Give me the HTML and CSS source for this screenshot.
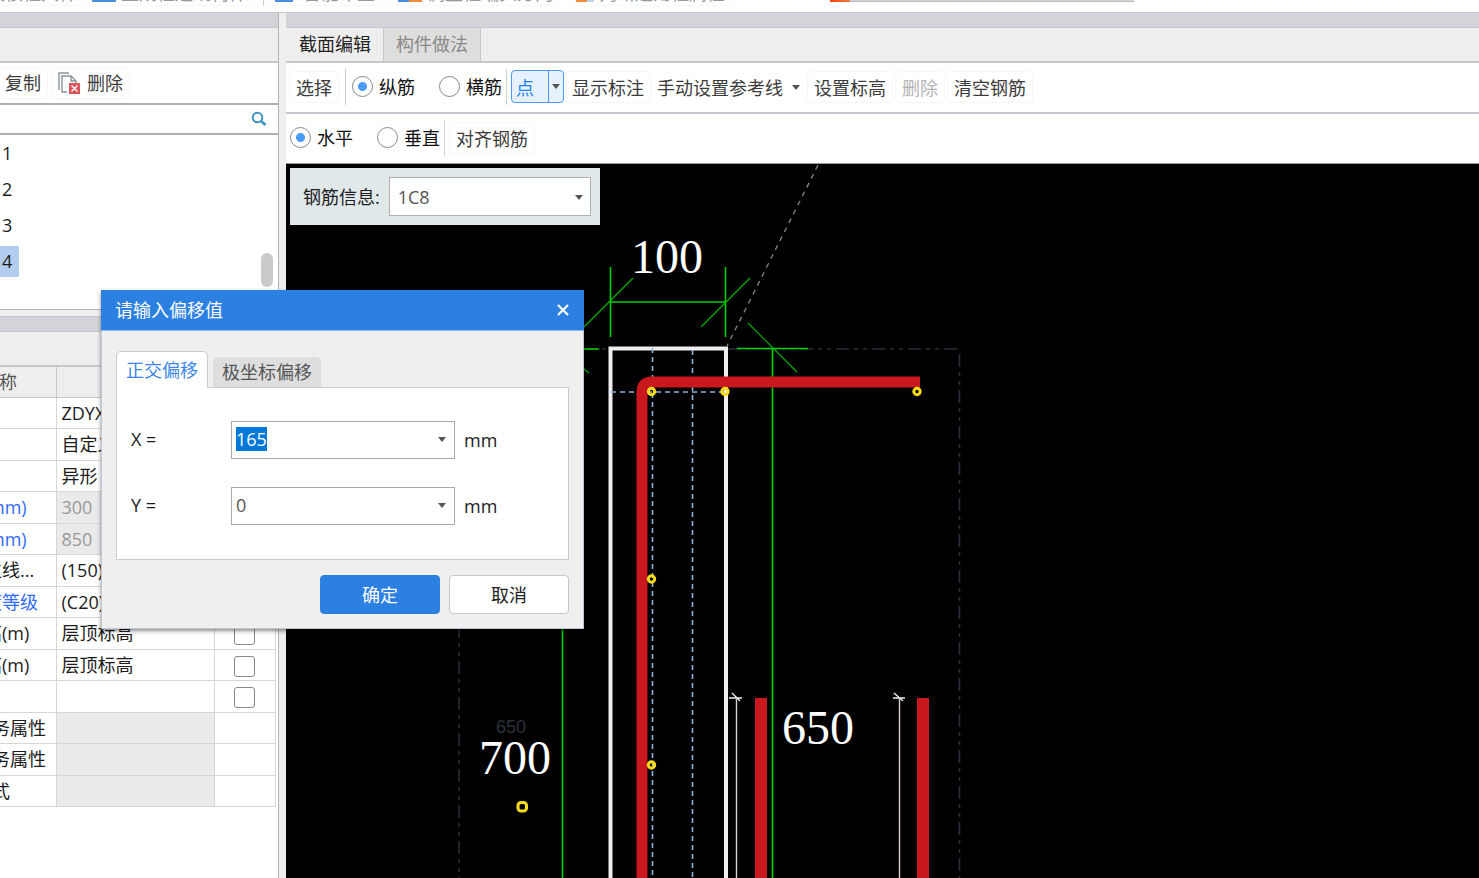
FILE: index.html
```html
<!DOCTYPE html>
<html lang="zh-CN">
<head>
<meta charset="utf-8">
<title>截面编辑</title>
<link rel="stylesheet" href="styles.css">
</head>
<body>
<header class="ribbon">
  <span class="ribbon-item first">校核柱大样</span>
  <span class="ribbon-item"><i class="chip wide"></i>生成柱边线构件</span>
  <span class="ribbon-sep"></span>
  <span class="ribbon-item roomy"><i class="chip"></i>智能布置</span>
  <span class="ribbon-item"><i class="chip mixed"></i>调整柱端头方向</span>
  <span class="ribbon-item"><i class="chip orange"></i>判断边角柱属性</span>
  <span class="notice"><i class="flame"></i></span>
</header>
<div class="workspace">
  <aside class="side">
    <div class="band"></div>
    <div class="caption"></div>
    <div class="side-tools">
      <button class="tool" type="button">复制</button>
      <button class="tool" type="button">
        <svg class="tool-icon" width="22" height="22" viewBox="0 0 22 22" fill="none" stroke="#8b939b" stroke-width="1.4">
          <path d="M1 18V1H11"/><path d="M9 20H4V4H13L18 9V11M13 4V9H18"/>
          <rect x="11" y="11" width="11" height="11" fill="#d9555a" stroke="none"/>
          <path d="M13.500 13.500L19.500 19.500M19.500 13.500L13.500 19.500" stroke="#fff" stroke-width="1.300"/>
        </svg>删除</button>
    </div>
    <label class="search">
      <input type="text" aria-label="搜索">
      <svg width="16" height="16" viewBox="0 0 16 16" fill="none" stroke="#3f97c4"><circle cx="6.500" cy="6.500" r="4.800" stroke-width="2"/><path d="M10 10L14.500 14" stroke-width="2.800"/></svg>
    </label>
    <div class="list-box">
      <ul class="list"><li>1</li><li>2</li><li>3</li><li class="on"><span>4</span></li></ul>
      <div class="thumb"></div>
    </div>
    <div class="gap"></div>
    <div class="band"></div>
    <div class="caption"></div>
    <table class="props">
      <colgroup><col class="c-name"><col class="c-value"><col class="c-add"></colgroup>
      <thead><tr><th class="cut-s">称</th><th></th><th></th></tr></thead>
      <tbody>
        <tr><td></td><td>ZDYX</td><td></td></tr>
        <tr><td></td><td>自定义</td><td></td></tr>
        <tr><td></td><td>异形</td><td></td></tr>
        <tr><td class="cut-m link">mm)</td><td class="off">300</td><td></td></tr>
        <tr><td class="cut-m link">mm)</td><td class="off">850</td><td></td></tr>
        <tr><td class="cut-l">位线...</td><td>(150)</td><td></td></tr>
        <tr><td class="cut-l link">度等级</td><td>(C20)</td><td></td></tr>
        <tr><td class="cut-l">高(m)</td><td>层顶标高</td><td class="mid"><input type="checkbox" aria-label="附加顶标高"></td></tr>
        <tr><td class="cut-l">高(m)</td><td>层顶标高</td><td class="mid"><input type="checkbox" aria-label="附加底标高"></td></tr>
        <tr><td></td><td></td><td class="mid"><input type="checkbox" aria-label="附加"></td></tr>
        <tr><td class="cut">务属性</td><td class="off"></td><td></td></tr>
        <tr><td class="cut">务属性</td><td class="off"></td><td></td></tr>
        <tr><td class="cut">式</td><td class="off"></td><td></td></tr>
      </tbody>
    </table>
  </aside>
  <main class="editor">
    <div class="band"></div>
    <nav class="tabs">
      <button class="tab active" type="button">截面编辑</button>
      <button class="tab" type="button">构件做法</button>
    </nav>
    <div class="bar">
      <button class="tool" type="button">选择</button>
      <span class="sep"></span>
      <label class="radio"><input type="radio" name="bar" checked>纵筋</label>
      <label class="radio next"><input type="radio" name="bar">横筋</label>
      <span class="sep tight"></span>
      <span class="split"><button type="button">点</button><button type="button" aria-label="更多绘制方式"><i class="arrow"></i></button></span>
      <button class="tool" type="button">显示标注</button>
      <button class="tool plain" type="button">手动设置参考线<i class="arrow"></i></button>
      <button class="tool" type="button">设置标高</button>
      <button class="tool" type="button" disabled>删除</button>
      <button class="tool" type="button">清空钢筋</button>
    </div>
    <div class="bar second">
      <label class="radio"><input type="radio" name="dir" checked>水平</label>
      <label class="radio next"><input type="radio" name="dir">垂直</label>
      <span class="sep tight"></span>
      <button class="tool" type="button">对齐钢筋</button>
    </div>
    <div class="canvas">
      <svg class="drawing" width="100%" height="100%">
        <g transform="translate(-286 -164)" fill="none">
          <g stroke="#292e38" stroke-width="1.600" stroke-dasharray="13 5 4 5 4 5">
            <path d="M584 349H960"/><path d="M959.500 354V878"/><path d="M459 625V878"/>
          </g>
          <path d="M818 165L727 346" stroke="#858585" stroke-width="1.300" stroke-dasharray="5 5"/>
          <g stroke="#00d000" stroke-width="1.600">
            <path d="M610.500 267V337M725.500 267V337M610 302H726"/>
            <path d="M584 349H599M737 348.500H808M772.500 348V878M562.500 620V878"/>
            <path d="M584 327L633 278M701 327L750 278M748 323L797 372M584 369L589 373" stroke-width="1.200" stroke="#00b400"/>
          </g>
          <path d="M610.500 880V348.500H726V880" stroke="#eee" stroke-width="4"/>
          <g stroke="#8fb4dc" stroke-width="1.600" stroke-dasharray="5 4">
            <path d="M652.500 348V878M692.500 350V878M611 392H726"/>
          </g>
          <g stroke="#c9181e">
            <path d="M642 880V392Q642 382 652 382H920" stroke-width="11"/>
            <path d="M761 698V880M923 698V880" stroke-width="12"/>
          </g>
          <g stroke="#d6d0c6" stroke-width="1.400">
            <path d="M736.500 699V880M899.500 699V880"/>
            <path d="M729 698H742M732 693L740 701M893 698H905M894 693L903 701" stroke="#eee"/>
          </g>
          <g stroke="#f8dc1c" stroke-width="3">
            <circle cx="651.500" cy="391.500" r="3.200"/><circle cx="725" cy="391.500" r="3.200"/><circle cx="917" cy="391.500" r="3.200"/>
            <circle cx="651.500" cy="579" r="3.200"/><circle cx="651.500" cy="765" r="3.200"/>
            <rect x="518" y="802.500" width="8.500" height="8.500" rx="3"/>
          </g>
          <g class="dim"><text x="631" y="273">100</text><text x="479" y="774">700</text><text x="782" y="744">650</text></g>
          <text class="dim-small" x="496" y="733">650</text>
        </g>
      </svg>
      <div class="rebar">
        <label for="rebar">钢筋信息:</label>
        <select id="rebar"><option>1C8</option></select>
      </div>
    </div>
  </main>
</div>
<section class="dialog" role="dialog" aria-labelledby="dlg-title">
  <div class="dialog-head">
    <span id="dlg-title">请输入偏移值</span>
    <button type="button" class="close" aria-label="关闭"><svg width="12" height="12" viewBox="0 0 12 12" stroke="#fff" stroke-width="2.200"><path d="M1 1L11 11M11 1L1 11"/></svg></button>
  </div>
  <div class="dialog-body">
    <div class="dialog-tabs">
      <button type="button" class="dtab active">正交偏移</button>
      <button type="button" class="dtab">极坐标偏移</button>
    </div>
    <div class="pane">
      <div class="field"><label for="x">X =</label><span class="combo"><input id="x" type="text" value="165"><button type="button" aria-label="X 选项"><i class="arrow"></i></button></span><span class="unit">mm</span></div>
      <div class="field"><label for="y">Y =</label><span class="combo"><input id="y" type="text" value="0"><button type="button" aria-label="Y 选项"><i class="arrow"></i></button></span><span class="unit">mm</span></div>
    </div>
    <div class="actions">
      <button type="button" class="btn primary">确定</button>
      <button type="button" class="btn">取消</button>
    </div>
  </div>
</section>
<script src="main.js"></script>
</body>
</html>
```

FILE: styles.css
```css
* { box-sizing: border-box; }
body {
  margin: 0;
  height: 100vh;
  display: flex;
  flex-direction: column;
  overflow: hidden;
  background: #fff;
  color: #1c1c1c;
  font: 18px/24px "Open Sans", "Noto Sans CJK SC", sans-serif;
}
button, input, select { font: inherit; color: inherit; margin: 0; padding: 0; border: 0; background: none; }
button { white-space: nowrap; }

.ribbon { height: 12px; display: flex; align-items: flex-start; overflow: hidden; flex: none; color: #999; }
.ribbon-item {
  flex: none; height: 27px; margin-top: -21px; margin-right: 9px; padding: 0 6px;
  display: flex; align-items: center; gap: 5px;
  border: 1px solid #f7f7f7; border-radius: 4px;
}
.ribbon-item.first { padding-left: 0; margin-left: -14px; margin-right: 1px; }
.ribbon-item.roomy { gap: 10px; }
.ribbon-sep { flex: none; width: 1px; height: 6px; margin-right: 4px; background: #ccc; }
.chip { width: 18px; height: 20px; margin-bottom: 2px; background: #4a8fe0; }
.chip.wide { width: 24px; }
.chip.mixed { width: 24px; background: linear-gradient(90deg, #4a8fe0 45%, #f58a3c 45%); }
.chip.orange { background: linear-gradient(90deg, #f58a3c 60%, #bcd6ee 60%); }
.notice { flex: none; width: 304px; height: 2px; margin-left: 89px; background: #d3d4da; border-bottom: 1px solid #bbb; }
.flame { display: block; width: 20px; height: 2px; background: linear-gradient(90deg, #f4430c, #f97a40); }

.workspace { flex: 1; min-height: 0; display: flex; gap: 7px; background: #efefef; border-top: 1px solid #c5c9cd; }
.side { width: 279px; flex: none; background: #fff; border-right: 1px solid #b4b4b4; }
.editor { flex: 1; min-width: 0; display: flex; flex-direction: column; background: #fff; }
.band { height: 15px; flex: none; background: #d2d4da; border-bottom: 1px solid #c5c9cd; }
.caption { height: 35px; background: #eee; border-bottom: 2px solid #c5c9cd; }
.side-tools { height: 40px; display: flex; align-items: center; gap: 3px; }
.tool {
  height: 32px; padding: 0 6px; display: flex; align-items: center;
  border: 1px solid #f7f7f7; border-radius: 4px; color: #3c3c3c;
}
.tool:disabled { color: #b4b4b4; }
.side-tools .tool:first-child { border-left: 0; padding-left: 5px; }
.tool-icon { margin-right: 7px; }
.search { height: 32px; display: flex; align-items: center; padding-right: 11px; border: solid #b0b0b0; border-width: 2px 0; }
.search input { flex: 1; min-width: 0; outline: 0; }
.list-box { height: 175px; display: flex; border-bottom: 1px solid #b4b4b4; }
.list { flex: 1; margin: 0; padding: 1px 0 0; list-style: none; }
.list li { height: 36px; padding: 2px 0; line-height: 30px; text-indent: 2px; }
.list .on span { display: block; width: 19px; height: 31px; background: #b3cdf0; }
.thumb { width: 12px; height: 34px; margin: 118px 5px 0 0; border-radius: 6px; background: #cacaca; }
.gap { height: 7px; background: #efefef; border-bottom: 1px solid #c5c9cd; }

.props { width: 276px; table-layout: fixed; border-collapse: collapse; }
.c-name { width: 56px; }
.c-value { width: 158px; }
.props th, .props td { height: 31px; padding: 0; border: 1px solid #d6d6d6; white-space: nowrap; text-align: left; font-weight: 400; overflow: hidden; }
.props tr > :first-child { border-left: 0; }
.props tbody tr:nth-child(even) td { height: 32px; }
.props thead th { height: 30px; background: #eee; color: #555; border-color: #c8c8c8; border-top: 0; }
.props td:nth-child(2) { padding-left: 5px; }
.props .off { background: #eaeaea; color: #999; }
.props .link { color: #2e6bff; }
.props .mid { text-align: center; }
.cut-s { text-indent: -1px; }
.cut { text-indent: -8px; }
.cut-m { text-indent: -12px; }
.cut-l { text-indent: -16px; }
input[type="checkbox"] { appearance: none; display: inline-block; vertical-align: middle; width: 21px; height: 21px; border: 1px solid #888; border-radius: 3px; background: #fff; }

.tabs { height: 35px; flex: none; display: flex; background: #eee; border-bottom: 2px solid #c5c9cd; }
.tab { padding: 0 12px 2px; background: #dedede; color: #888; border-right: 1px solid #c5c9cd; }
.tab.active { background: #eee; color: #222; padding-left: 13px; }

.bar { height: 51px; flex: none; display: flex; align-items: center; padding: 0 0 2px 3px; gap: 2px; border-bottom: 2px solid #c5c9cd; }
.bar.second { height: 50px; border-bottom-width: 1px; border-color: #999; }
.bar .tool { padding: 2px 6px 0; }
.bar .tool.plain { padding: 2px 4px 0 3px; border-color: transparent; }
.bar .plain .arrow { margin-left: 9px; }
.sep { width: 1px; height: 36px; margin: 0 4px; background: #d0d0d0; }
.sep.tight { margin: 0 2px; }
.radio { display: flex; align-items: center; gap: 6px; color: #111; }
.radio.next { margin-left: 22px; }
.second .radio:first-child { margin-left: 1px; }
input[type="radio"] { appearance: none; width: 21px; height: 21px; border: 1px solid #888; border-radius: 50%; background: #fff; }
input[type="radio"]:checked { background: radial-gradient(circle, #4a9bff 4px, #fff 5px); }
.split { display: flex; height: 33px; border: 1px solid #4a9bff; border-radius: 4px; background: #e6f1fd; }
.split button { width: 36px; padding: 2px 8px 0 4px; text-align: left; color: #2182f0; }
.split button + button { width: 15px; padding: 0; display: flex; align-items: center; justify-content: center; border-left: 1px solid #4a9bff; }
.split + .tool { margin-left: -1px; }
.arrow { display: block; border: 4px solid transparent; border-top: 5px solid #555; border-bottom: 0; }

.canvas { flex: 1; min-height: 0; position: relative; background: #000; overflow: hidden; }
.drawing { position: absolute; inset: 0; }
.dim { font: 48px "Liberation Serif", serif; fill: #fff; }
.dim-small { font: 18px "Liberation Sans", sans-serif; fill: #2c323d; }
.rebar {
  position: absolute; left: 4px; top: 4px; height: 57px; padding: 0 9px 0 13px;
  display: flex; align-items: center; gap: 9px; background: #e1e8ea;
}
.rebar select { appearance: none; width: 202px; height: 39px; padding-left: 8px; color: #555; background: #fff; border: 1px solid #b0b0b0; }
.rebar::after { content: ""; position: absolute; right: 17px; top: 27px; border: 4px solid transparent; border-top: 5px solid #555; border-bottom: 0; pointer-events: none; }

.dialog {
  position: absolute; left: 101px; top: 290px; width: 483px;
  background: #efefef; border: 1px solid #bcc6d6; border-top: 0; box-shadow: 0 2px 4px rgba(0, 0, 0, .45);
}
.dialog-head { height: 41px; margin: 0 -1px; padding: 0 15px 0 14px; display: flex; align-items: center; justify-content: space-between; background: #2c80e2; color: #fff; border-bottom: 1px solid #8ebbf0; }
.close { display: flex; }
.dialog-body { padding: 20px 14px 14px; }
.dialog-tabs { display: flex; align-items: flex-end; gap: 5px; }
.dtab { height: 30px; padding: 0 9px; background: #dedede; color: #555; border-radius: 5px 5px 0 0; }
.dtab.active { position: relative; height: 37px; margin-bottom: -1px; background: #fff; color: #3d87ea; border: 1px solid #c8cbcf; border-bottom: 0; }
.pane { height: 173px; padding: 33px 14px; display: flex; flex-direction: column; gap: 28px; background: #fff; border: 1px solid #c8cbcf; }
.field { display: flex; align-items: center; }
.field label { width: 100px; padding-bottom: 2px; }
.unit { padding-bottom: 1px; }
.combo { width: 224px; height: 38px; margin-right: 9px; padding: 0 4px 2px; display: flex; align-items: center; border: 1px solid #aaa; }
.combo input { flex: 1; min-width: 0; height: 26px; color: #555; outline: 0; }
.combo input::selection { background: #0078d7; color: #fff; }
.combo button { width: 16px; height: 26px; display: flex; align-items: center; justify-content: center; }
.actions { display: flex; justify-content: flex-end; gap: 9px; margin-top: 15px; }
.btn { width: 120px; height: 39px; border: 1px solid #c8c8c8; border-radius: 4px; background: #fff; color: #222; }
.btn.primary { background: #2c80e2; border-color: #2c80e2; color: #fff; }
```

FILE: main.js
```js
const x = document.getElementById('x');
x.focus();
x.select();
```
